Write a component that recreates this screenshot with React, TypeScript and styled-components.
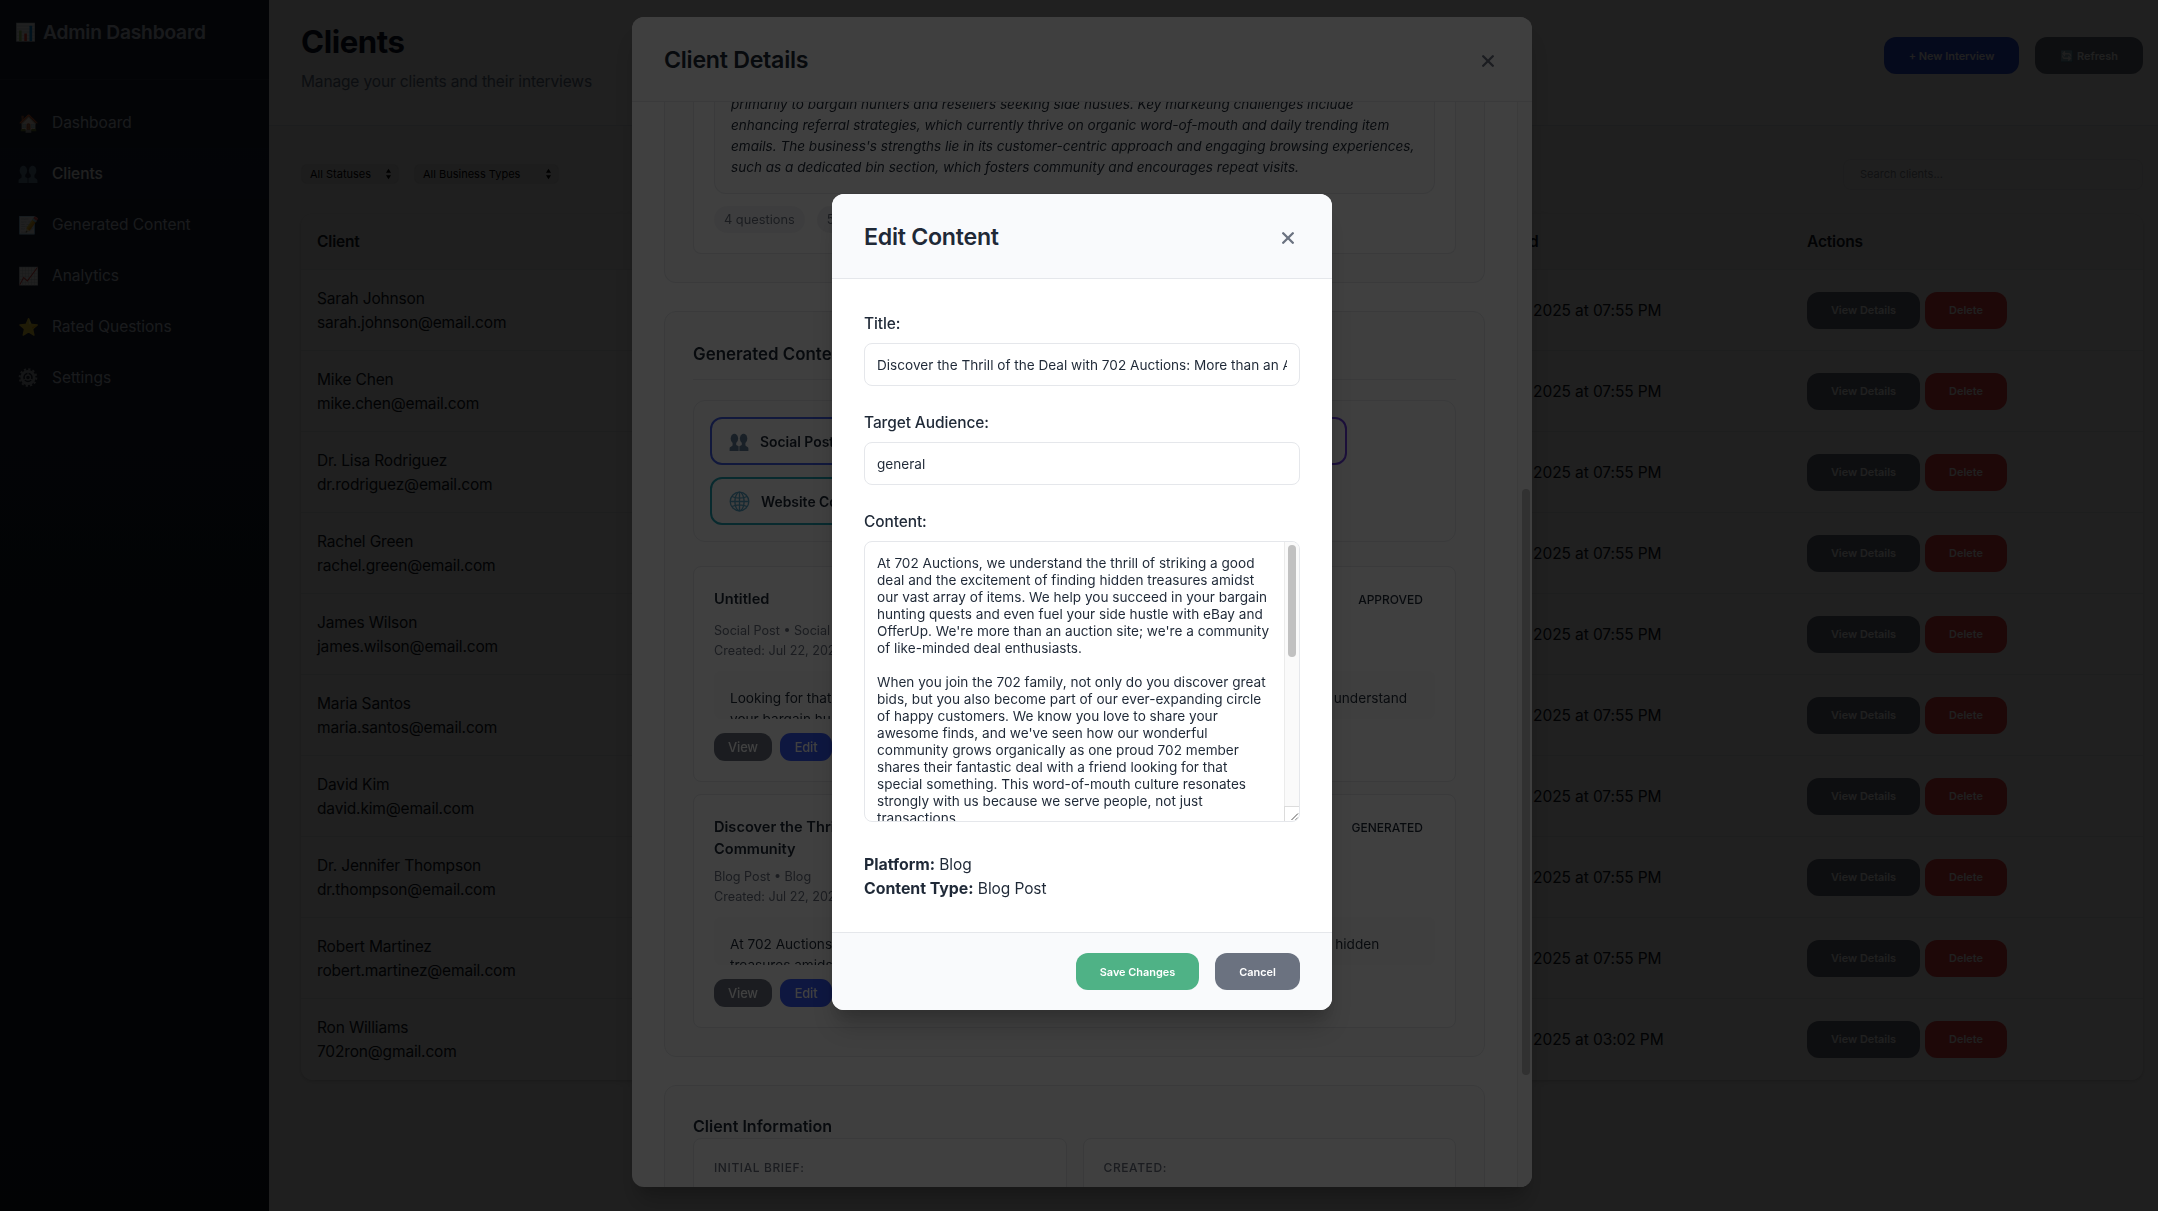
import React from "react";
import styled, { createGlobalStyle } from "styled-components";

const GlobalStyle = createGlobalStyle`
  *, *::before, *::after { box-sizing: border-box; }
  html, body { margin: 0; height: 100%; overflow: hidden; }
  body {
    font-family: Inter, "Liberation Sans", sans-serif;
    font-size: 15.5px;
    line-height: 24px;
    letter-spacing: -0.0105em;
    color: #1f2937;
    background: #fafafa;
  }
  h1, h2, h3, h4, p { margin: 0; }
  button { font: inherit; letter-spacing: inherit; border: 0; margin: 0; padding: 0; }
`;

/* ---------- Page shell ---------- */

const Shell = styled.div`
  display: flex;
  width: 100vw;
  height: 100vh;
  overflow: hidden;
`;

const Sidebar = styled.aside`
  width: 269px;
  flex: none;
  background: linear-gradient(180deg, #1c2636 0%, #111827 100%);
  color: #cbd5e1;
`;

const Brand = styled.div`
  display: flex;
  align-items: flex-start;
  gap: 8px;
  height: 80px;
  padding: 17px 15px;
  border-bottom: 1px solid #2a3546;
  font-size: 19.2px;
  font-weight: 600;
  line-height: 31px;
  letter-spacing: -0.0105em;
  white-space: nowrap;
`;

const Glyph = styled.span<{ $size?: number; $box?: number }>`
  display: inline-flex;
  align-items: center;
  justify-content: center;
  flex: none;
  width: ${(p) => p.$box ?? 20}px;
  font-size: ${(p) => p.$size ?? 17}px;
  letter-spacing: 0;
`;

const Nav = styled.nav`
  display: flex;
  flex-direction: column;
  padding-top: 17px;
`;

const NavItem = styled.div<{ $active?: boolean }>`
  display: flex;
  align-items: center;
  gap: 14px;
  height: 51px;
  padding: 0 16px 0 18px;
  font-size: 15.5px;
  font-weight: ${(p) => (p.$active ? 500 : 400)};
  letter-spacing: -0.002em;
  color: ${(p) => (p.$active ? "#ffffff" : "#cbd5e1")};
  background: ${(p) => (p.$active ? "rgba(37, 99, 235, 0.06)" : "transparent")};
`;

const Main = styled.main`
  flex: 1;
  min-width: 0;
`;

const PageHeader = styled.header`
  display: flex;
  justify-content: space-between;
  height: 126px;
  padding: 22px 15px 0 32px;
  background: #ffffff;
  border-bottom: 1px solid #e2e8f0;
`;

const PageTitle = styled.h1`
  font-size: 31.2px;
  line-height: 40px;
  font-weight: 700;
  letter-spacing: -0.014em;
  color: #0f172a;
`;

const PageSubtitle = styled.p`
  margin-top: 8px;
  color: #64748b;
  letter-spacing: -0.009em;
`;

const HeaderActions = styled.div`
  display: flex;
  gap: 16px;
  padding-top: 15px;
`;

const tones = {
  primary: "#2f52e0",
  neutral: "#6b7280",
  danger: "#ef4444",
  success: "#4fb286",
};

const Button = styled.button<{ $tone: keyof typeof tones; $width: number }>`
  display: inline-flex;
  align-items: center;
  justify-content: center;
  gap: 4px;
  width: ${(p) => p.$width}px;
  height: 37px;
  padding-top: 1px;
  border-radius: 12px;
  font-size: 10.92px;
  line-height: 13px;
  font-weight: 600;
  letter-spacing: 0;
  color: #ffffff;
  background: ${(p) => tones[p.$tone]};
`;

const Filters = styled.div`
  display: flex;
  align-items: center;
  height: 88px;
  padding: 8px 15px 0 33px;
`;

const Select = styled.div<{ $width: number }>`
  display: flex;
  align-items: center;
  justify-content: space-between;
  width: ${(p) => p.$width}px;
  height: 18px;
  margin-right: 17px;
  padding: 0 6px 0 8px;
  border-radius: 5px;
  background: #ececec;
  box-shadow: 0 0 2px rgba(0, 0, 0, 0.3);
  font-size: 11px;
  line-height: 18px;
  letter-spacing: 0;
  color: #000000;
`;

const SearchBox = styled.div`
  width: 300px;
  height: 31px;
  margin: 0 0 0 auto;
  padding: 0 16px;
  border: 1px solid #e9ebee;
  border-radius: 8px;
  background: #fcfcfc;
  font-size: 11px;
  line-height: 29px;
  letter-spacing: 0;
  color: #858b94;
`;

const Table = styled.section`
  margin: 0 15px 0 32px;
  border-radius: 12px;
  background: #ffffff;
  box-shadow: 0 1px 3px rgba(0, 0, 0, 0.12), 0 2px 6px rgba(0, 0, 0, 0.06);
  overflow: hidden;
`;

const TableRow = styled.div<{ $head?: boolean }>`
  display: grid;
  grid-template-columns: 1163px 327px 1fr;
  align-items: center;
  height: ${(p) => (p.$head ? 56 : 81)}px;
  padding-top: ${(p) => (p.$head ? 0 : 2)}px;
  border-bottom: 1px solid #eceef1;
  background: ${(p) => (p.$head ? "#fafafa" : "#ffffff")};
  font-weight: ${(p) => (p.$head ? 600 : 400)};
  color: #111827;
  &:last-child { border-bottom-color: transparent; }
`;

const Cell = styled.div`
  padding: 0 16px;
  white-space: nowrap;
`;

const DateCell = styled(Cell)`
  letter-spacing: -0.006em;
`;

const RowActions = styled(Cell)`
  display: flex;
  gap: 5px;
  padding-bottom: 2px;
`;

/* ---------- Dialogs ---------- */

const Overlay = styled.div<{ $alpha: number }>`
  position: fixed;
  inset: 0;
  display: flex;
  align-items: center;
  justify-content: center;
  background: rgba(0, 0, 0, ${(p) => p.$alpha});
`;

const Dialog = styled.div<{ $width: number; $height: number }>`
  display: flex;
  flex-direction: column;
  width: ${(p) => p.$width}px;
  height: ${(p) => p.$height}px;
  margin: -7px 0 0 6px;
  border-radius: 12px;
  background: #ffffff;
  box-shadow: 0 20px 25px -5px rgba(0, 0, 0, 0.2), 0 10px 10px -5px rgba(0, 0, 0, 0.08);
  overflow: hidden;
`;

const DialogHeader = styled.header<{ $plain?: boolean }>`
  display: flex;
  align-items: center;
  justify-content: space-between;
  flex: none;
  height: 85px;
  padding: 2px 38px 0 32px;
  border-bottom: 1px solid #e5e7eb;
  background: ${(p) => (p.$plain ? "#fafafa" : "#f9fafc")};
`;

const DialogTitle = styled.h2`
  font-size: 23.2px;
  line-height: 36px;
  font-weight: 600;
  letter-spacing: -0.012em;
`;

const ScrollArea = styled.div`
  display: flex;
  flex: 1;
  min-height: 0;
  overflow: hidden;
`;

const ScrollContent = styled.div`
  display: flex;
  flex-direction: column;
  gap: 28px;
  width: 885px;
  padding: 0 32px;
`;

const ScrollTrack = styled.div<{ $top: number }>`
  width: 15px;
  flex: none;
  padding: ${(p) => p.$top}px 0 0 4px;
  border-left: 1px solid #ebebeb;
  background: #fafafa;
`;

const ScrollThumb = styled.div<{ $height: number }>`
  width: 8px;
  height: ${(p) => p.$height}px;
  border-radius: 4px;
  background: #c1c1c1;
`;

const Section = styled.section<{ $cut?: boolean }>`
  flex: none;
  width: 821px;
  padding: ${(p) => (p.$cut ? "0 28px 28px" : "28px")};
  border: 1px solid #e5e7eb;
  border-top-width: ${(p) => (p.$cut ? 0 : 1)}px;
  border-radius: ${(p) => (p.$cut ? "0 0 12px 12px" : "12px")};
  background: #fbfbfb;
`;

const SummaryCard = styled.div`
  padding: 0 20px 20px;
  border: 1px solid #e5e7eb;
  border-top: 0;
  border-radius: 0 0 8px 8px;
  background: #fdfdfd;
`;

const Summary = styled.div`
  height: 92px;
  padding: 0 16px;
  border: 1px solid #e5e7eb;
  border-top: 0;
  border-radius: 0 0 12px 12px;
  background: #fbfbfb;
  overflow: hidden;
  font-size: 13.57px;
  line-height: 21px;
  letter-spacing: 0;
  font-style: italic;
  white-space: pre;
`;

const SummaryText = styled.p`
  margin-top: -8px;
`;

const Tags = styled.div`
  display: flex;
  gap: 12px;
  margin-top: 12px;
`;

const Tag = styled.span`
  height: 27px;
  padding: 0 10px;
  border-radius: 14px;
  background: #f3f4f6;
  font-size: 12.8px;
  line-height: 27px;
  letter-spacing: 0;
  color: #6b7280;
`;

const SectionTitle = styled.h3<{ $ruled?: boolean }>`
  height: ${(p) => (p.$ruled ? 40 : 24)}px;
  border-bottom: ${(p) => (p.$ruled ? "1px solid #e5e7eb" : "0")};
  font-size: ${(p) => (p.$ruled ? 16.9 : 16.1)}px;
  line-height: ${(p) => (p.$ruled ? 29 : 25)}px;
  font-weight: 600;
  letter-spacing: 0;
`;

const Generators = styled.div`
  display: flex;
  flex-direction: column;
  gap: 12px;
  margin-top: 20px;
  padding: 16px 108px 16px 16px;
  height: 142px;
  border: 1px solid #e5e7eb;
  border-radius: 12px;
  background: #fbfbfb;
`;

const GeneratorRow = styled.div`
  display: flex;
  gap: 12px;
`;

const GeneratorButton = styled.div<{ $color: string; $grow?: boolean }>`
  display: flex;
  align-items: center;
  gap: 11px;
  flex: ${(p) => (p.$grow ? "1" : "none")};
  height: 48px;
  padding: 1px 18px 0 17px;
  border: 2px solid ${(p) => p.$color};
  border-radius: 12px;
  background: #fdfdfd;
  font-size: 13.9px;
  font-weight: 600;
  letter-spacing: 0;
`;

const ContentCard = styled.article<{ $gap: number }>`
  margin-top: ${(p) => p.$gap}px;
  padding: 20px;
  border: 1px solid #e5e7eb;
  border-radius: 8px;
  background: #fdfdfd;
`;

const CardHead = styled.div`
  display: flex;
  justify-content: space-between;
  min-height: 27px;
  padding-right: 12px;
`;

const CardTitle = styled.h4<{ $wide?: boolean }>`
  height: ${(p) => (p.$wide ? 45 : 22.5)}px;
  max-width: 560px;
  padding-top: 1px;
  font-size: 14.6px;
  line-height: 22px;
  font-weight: 600;
  letter-spacing: 0;
`;

const Status = styled.span`
  font-size: 12px;
  line-height: 26px;
  font-weight: 500;
  letter-spacing: 0;
`;

const Meta = styled.div`
  height: 39px;
  margin-top: 7px;
  font-size: 12.6px;
  line-height: 19.5px;
  letter-spacing: 0;
  color: #6b7280;
`;

const Preview = styled.div`
  height: 48px;
  margin-top: 11px;
  padding: 17px 16px 0;
  border-radius: 8px;
  background: #fafafa;
  overflow: hidden;
  font-size: 13.63px;
  line-height: 21px;
  letter-spacing: 0;
  white-space: pre;
`;

const CardActions = styled.div`
  display: flex;
  gap: 8px;
  margin-top: 14px;
`;

const SmallButton = styled.button<{ $primary?: boolean }>`
  height: 28px;
  width: ${(p) => (p.$primary ? 52 : 58)}px;
  padding-top: 1px;
  border-radius: 11px;
  font-size: 12.9px;
  font-weight: 500;
  line-height: 27px;
  color: #ffffff;
  background: ${(p) => (p.$primary ? "#3b5bfd" : "#6b7280")};
`;

const InfoGrid = styled.div`
  display: grid;
  grid-template-columns: 1fr 1fr;
  gap: 16px;
`;

const InfoCard = styled.div`
  height: 90px;
  padding: 17px 20px;
  border: 1px solid #e5e7eb;
  border-radius: 8px;
  background: #fdfdfd;
  font-size: 12px;
  font-weight: 500;
  letter-spacing: 0.05em;
  color: #6b7280;
`;

/* ---------- Edit form ---------- */

const Form = styled.div`
  display: flex;
  flex-direction: column;
  flex: 1;
  min-height: 0;
  padding: 32px 32px 31px;
`;

const Label = styled.label`
  flex: none;
  height: 24px;
  padding-top: 1px;
  font-weight: 500;
  letter-spacing: -0.007em;
  margin-bottom: 8px;
`;

const Field = styled.div`
  flex: none;
  height: 43px;
  margin-bottom: 24px;
  padding: 0 12px;
  border: 1px solid #e5e7eb;
  border-radius: 8px;
  background: #ffffff;
  font-size: 13.6px;
  line-height: 43px;
  letter-spacing: 0;
`;

const FieldText = styled.div`
  overflow: hidden;
  white-space: nowrap;
`;

const TextArea = styled.div`
  display: flex;
  flex: none;
  height: 281px;
  margin-bottom: 31px;
  border: 1px solid #e5e7eb;
  border-radius: 8px;
  overflow: hidden;
`;

const TextAreaBody = styled.div`
  flex: 1;
  padding: 13px 0 0 12px;
  overflow: hidden;
  font-size: 13.6px;
  line-height: 17px;
  letter-spacing: 0;
  white-space: pre;
`;

const TextAreaRail = styled.div`
  display: flex;
  flex-direction: column;
  flex: none;
`;

const RailTrack = styled(ScrollTrack)`
  flex: 1;
  padding-left: 3px;
`;

const ResizeCorner = styled.div`
  width: 15px;
  height: 15px;
  border: 1px solid #dcdcdc;
  border-width: 1px 0 0 1px;
  line-height: 0;
`;

const Fact = styled.div`
  flex: none;
  height: 24px;
  letter-spacing: -0.006em;
  strong {
    font-size: 15.9px;
    letter-spacing: -0.002em;
  }
`;

const DialogFooter = styled.footer`
  display: flex;
  justify-content: flex-end;
  gap: 16px;
  flex: none;
  height: 78px;
  padding: 20px 32px;
  border-top: 1px solid #e5e7eb;
  background: #f9fafc;
`;

/* ---------- Icons ---------- */

const CloseIcon = () => (
  <svg width="12" height="13" viewBox="0 0 12 13">
    <path d="M1.2 2.2 10.8 11.8M10.8 2.2 1.2 11.8" stroke="#6b7280" strokeWidth="2.3" strokeLinecap="round" />
  </svg>
);

const PeopleIcon = () => (
  <svg width="20" height="20" viewBox="0 0 20 20" fill="#64809b">
    <ellipse cx="5.4" cy="6.6" rx="3.7" ry="4.9" />
    <path d="M3.6 10h3.6v3l2.4 1.2v4.8H.6v-2.6c0-1.7 3-1.9 3-3.4z" />
    <ellipse cx="14.6" cy="6.6" rx="3.7" ry="4.9" />
    <path d="M12.8 10h3.6v3c0 1.5 3 1.7 3 3.4V19h-9v-4.800l2.400-1.200z" />
  </svg>
);

const GlobeIcon = () => (
  <svg width="21" height="21" viewBox="0 0 21 21" fill="none" stroke="#58a6c9" strokeWidth="1.3">
    <circle cx="10.5" cy="10.5" r="9.3" />
    <ellipse cx="10.5" cy="10.5" rx="4.6" ry="9.3" />
    <path d="M10.5 1.2v18.6M1.2 10.5h18.6M2.8 5.5c4.5 2 10.9 2 15.4 0M2.8 15.5c4.5-2 10.9-2 15.4 0" />
  </svg>
);

const GearIcon = () => (
  <svg width="21" height="21" viewBox="0 0 21 21" fill="none" stroke="#a3a9ae">
    <circle cx="10.5" cy="10.5" r="8.7" strokeWidth="2.2" strokeDasharray="2.3 2.255" />
    <circle cx="10.5" cy="10.5" r="6.5" strokeWidth="3" />
    <circle cx="10.5" cy="10.5" r="2.6" strokeWidth="1.5" />
    <path d="M10.5 7.9V5M8.3 11.8l-2.5 1.5M12.7 11.8l2.5 1.5" strokeWidth="1.3" />
  </svg>
);

const SelectArrows = () => (
  <svg width="7" height="12" viewBox="0 0 7 12">
    <path d="M3.5.8 6 4.8H1zM3.5 11.2 6 7.2H1z" fill="#000000" />
  </svg>
);

const ResizeLines = () => (
  <svg width="14" height="14" viewBox="0 0 14 14">
    <path d="M6.5 13 13 6.5M10.5 13 13 10.5" stroke="#555555" strokeWidth="1" />
  </svg>
);

/* ---------- Data ---------- */

const navItems: { label: string; icon: React.ReactNode; active?: boolean }[] = [
  { label: "Dashboard", icon: "🏠" },
  { label: "Clients", icon: <PeopleIcon />, active: true },
  { label: "Generated Content", icon: "📝" },
  { label: "Analytics", icon: "📈" },
  { label: "Rated Questions", icon: "⭐" },
  { label: "Settings", icon: <GearIcon /> },
];

const clients = [
  ["Sarah Johnson", "sarah.johnson@email.com", "Jul 22, 2025 at 07:55 PM"],
  ["Mike Chen", "mike.chen@email.com", "Jul 22, 2025 at 07:55 PM"],
  ["Dr. Lisa Rodriguez", "dr.rodriguez@email.com", "Jul 22, 2025 at 07:55 PM"],
  ["Rachel Green", "rachel.green@email.com", "Jul 22, 2025 at 07:55 PM"],
  ["James Wilson", "james.wilson@email.com", "Jul 22, 2025 at 07:55 PM"],
  ["Maria Santos", "maria.santos@email.com", "Jul 22, 2025 at 07:55 PM"],
  ["David Kim", "david.kim@email.com", "Jul 22, 2025 at 07:55 PM"],
  ["Dr. Jennifer Thompson", "dr.thompson@email.com", "Jul 22, 2025 at 07:55 PM"],
  ["Robert Martinez", "robert.martinez@email.com", "Jul 22, 2025 at 07:55 PM"],
  ["Ron Williams", "702ron@gmail.com", "Jul 22, 2025 at 03:02 PM"],
];

const summary = `primarily to bargain hunters and resellers seeking side hustles. Key marketing challenges include
enhancing referral strategies, which currently thrive on organic word-of-mouth and daily trending item
emails. The business's strengths lie in its customer-centric approach and engaging browsing experiences,
such as a dedicated bin section, which fosters community and encourages repeat visits.`;

const posts = [
  {
    title: "Untitled",
    status: "APPROVED",
    meta: "Social Post • Social Media",
    preview: `Looking for that thrill of the perfect find? At 702 Auctions, we get it! Our community members understand
your bargain hunting quests and the excitement of hidden treasures.`,
    gap: 24,
    wide: false,
  },
  {
    title: "Discover the Thrill of the Deal with 702 Auctions: More than an Auction, a Community",
    status: "GENERATED",
    meta: "Blog Post • Blog",
    preview: `At 702 Auctions, we understand the thrill of striking a good deal and the excitement of finding hidden
treasures amidst our vast array of items.`,
    gap: 12,
    wide: true,
  },
];

const draft = `At 702 Auctions, we understand the thrill of striking a good
deal and the excitement of finding hidden treasures amidst
our vast array of items. We help you succeed in your bargain
hunting quests and even fuel your side hustle with eBay and
OfferUp. We're more than an auction site; we're a community
of like-minded deal enthusiasts.

When you join the 702 family, not only do you discover great
bids, but you also become part of our ever-expanding circle
of happy customers. We know you love to share your
awesome finds, and we've seen how our wonderful
community grows organically as one proud 702 member
shares their fantastic deal with a friend looking for that
special something. This word-of-mouth culture resonates
strongly with us because we serve people, not just
transactions.`;

/* ---------- Views ---------- */

function ClientsPage() {
  return (
    <Shell>
      <Sidebar>
        <Brand>
          <Glyph>📊</Glyph>
          Admin Dashboard
        </Brand>
        <Nav>
          {navItems.map((item) => (
            <NavItem key={item.label} $active={item.active}>
              <Glyph>{item.icon}</Glyph>
              {item.label}
            </NavItem>
          ))}
        </Nav>
      </Sidebar>
      <Main>
        <PageHeader>
          <div>
            <PageTitle>Clients</PageTitle>
            <PageSubtitle>Manage your clients and their interviews</PageSubtitle>
          </div>
          <HeaderActions>
            <Button $tone="primary" $width={135}>+ New Interview</Button>
            <Button $tone="neutral" $width={108}>
              <Glyph $size={11} $box={13}>🔄</Glyph>
              Refresh
            </Button>
          </HeaderActions>
        </PageHeader>
        <Filters>
          <Select $width={96}>All Statuses<SelectArrows /></Select>
          <Select $width={143}>All Business Types<SelectArrows /></Select>
          <SearchBox>Search clients...</SearchBox>
        </Filters>
        <Table>
          <TableRow $head>
            <Cell>Client</Cell>
            <Cell>Created</Cell>
            <Cell>Actions</Cell>
          </TableRow>
          {clients.map(([name, email, created]) => (
            <TableRow key={email}>
              <Cell>
                <div>{name}</div>
                <div>{email}</div>
              </Cell>
              <DateCell>{created}</DateCell>
              <RowActions>
                <Button $tone="neutral" $width={113}>View Details</Button>
                <Button $tone="danger" $width={82}>Delete</Button>
              </RowActions>
            </TableRow>
          ))}
        </Table>
      </Main>
    </Shell>
  );
}

function ClientDetails() {
  return (
    <Dialog $width={900} $height={1170}>
      <DialogHeader $plain>
        <DialogTitle>Client Details</DialogTitle>
        <CloseIcon />
      </DialogHeader>
      <ScrollArea>
        <ScrollContent>
          <Section $cut>
            <SummaryCard>
              <Summary>
                <SummaryText>{summary}</SummaryText>
              </Summary>
              <Tags>
                <Tag>4 questions</Tag>
                <Tag>5 answers</Tag>
              </Tags>
            </SummaryCard>
          </Section>
          <Section>
            <SectionTitle $ruled>Generated Content</SectionTitle>
            <Generators>
              <GeneratorRow>
                <GeneratorButton $color="#4361ee">
                  <PeopleIcon />
                  Social Posts
                </GeneratorButton>
                <GeneratorButton $color="#6f42e8" $grow>Blog Posts</GeneratorButton>
              </GeneratorRow>
              <GeneratorRow>
                <GeneratorButton $color="#22a6b8">
                  <GlobeIcon />
                  Website Content
                </GeneratorButton>
              </GeneratorRow>
            </Generators>
            {posts.map((post) => (
              <ContentCard key={post.title} $gap={post.gap}>
                <CardHead>
                  <CardTitle $wide={post.wide}>{post.title}</CardTitle>
                  <Status>{post.status}</Status>
                </CardHead>
                <Meta>
                  <div>{post.meta}</div>
                  <div>Created: Jul 22, 2025</div>
                </Meta>
                <Preview>{post.preview}</Preview>
                <CardActions>
                  <SmallButton>View</SmallButton>
                  <SmallButton $primary>Edit</SmallButton>
                </CardActions>
              </ContentCard>
            ))}
          </Section>
          <Section>
            <SectionTitle>Client Information</SectionTitle>
            <InfoGrid>
              <InfoCard>INITIAL BRIEF:</InfoCard>
              <InfoCard>CREATED:</InfoCard>
            </InfoGrid>
          </Section>
        </ScrollContent>
        <ScrollTrack $top={387}>
          <ScrollThumb $height={586} />
        </ScrollTrack>
      </ScrollArea>
    </Dialog>
  );
}

function EditContent() {
  return (
    <Dialog $width={500} $height={816}>
      <DialogHeader>
        <DialogTitle>Edit Content</DialogTitle>
        <CloseIcon />
      </DialogHeader>
      <Form>
        <Label>Title:</Label>
        <Field>
          <FieldText>Discover the Thrill of the Deal with 702 Auctions: More than an Auction, a Community</FieldText>
        </Field>
        <Label>Target Audience:</Label>
        <Field>general</Field>
        <Label>Content:</Label>
        <TextArea>
          <TextAreaBody>{draft}</TextAreaBody>
          <TextAreaRail>
            <RailTrack $top={3}>
              <ScrollThumb $height={112} />
            </RailTrack>
            <ResizeCorner>
              <ResizeLines />
            </ResizeCorner>
          </TextAreaRail>
        </TextArea>
        <Fact><strong>Platform:</strong> Blog</Fact>
        <Fact><strong>Content Type:</strong> Blog Post</Fact>
      </Form>
      <DialogFooter>
        <Button $tone="success" $width={123}>Save Changes</Button>
        <Button $tone="neutral" $width={85}>Cancel</Button>
      </DialogFooter>
    </Dialog>
  );
}

export default function App() {
  return (
    <>
      <GlobalStyle />
      <ClientsPage />
      <Overlay $alpha={0.5}>
        <ClientDetails />
      </Overlay>
      <Overlay $alpha={0.75}>
        <EditContent />
      </Overlay>
    </>
  );
}
